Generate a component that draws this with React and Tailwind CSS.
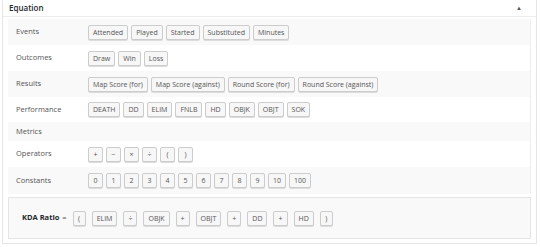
const rows = [
  { label: 'Events', items: ['Attended', 'Played', 'Started', 'Substituted', 'Minutes'], h: 'h-[26px]' },
  { label: 'Outcomes', items: ['Draw', 'Win', 'Loss'], h: 'h-[26px]' },
  { label: 'Results', items: ['Map Score (for)', 'Map Score (against)', 'Round Score (for)', 'Round Score (against)'], h: 'h-[26px]' },
  { label: 'Performance', items: ['DEATH', 'DD', 'ELIM', 'FNLB', 'HD', 'OBJK', 'OBJT', 'SOK'], h: 'h-[25px]' },
  { label: 'Metrics', items: [], h: 'h-[19px]' },
  { label: 'Operators', items: ['+', '−', '×', '÷', '(', ')'], h: 'h-[26px]' },
  { label: 'Constants', items: ['0', '1', '2', '3', '4', '5', '6', '7', '8', '9', '10', '100'], h: 'h-[27px]' },
];

const equation = ['(', 'ELIM', '÷', 'OBJK', '+', 'OBJT', '+', 'DD', '+', 'HD', ')'];

// small WP-style button used for every variable and operator
const Chip = ({ children, narrow }) => (
  <span
    className={`inline-flex items-center justify-center h-[15px] px-[4px] ${narrow ? 'min-w-[13px]' : 'min-w-[15px]'} bg-[#f7f7f7] border border-[#cccccc] rounded-[2px] shadow-[0_1px_0_#dcdcdc] text-[7px] text-[#555] leading-none whitespace-nowrap`}
  >
    {children}
  </span>
);

export default function App() {
  return (
    <div className="w-[540px] h-[247px] bg-white pl-[2px] pr-[3px] pb-[3px]" style={{ fontFamily: '"Open Sans", "Noto Sans", sans-serif' }}>
      <div className="h-full border border-t-0 border-[#e5e5e5] bg-white flex flex-col">
        {/* Header */}
        <div className="h-[17px] flex items-center justify-between pl-[6px] pr-[14px] border-b border-[#eeeeee]">
          <span className="text-[8px] font-semibold text-[#23282d]">Equation</span>
          <span className="text-[6px] text-[#555]">▲</span>
        </div>

        <div className="flex-1 px-[5px] pt-[2px] pb-[4px] flex flex-col">
          {/* Variable table */}
          <div className="border-r border-[#eeeeee]">
            {rows.map((row, i) => (
              <div
                key={row.label}
                className={`flex items-center ${row.h} ${i % 2 === 0 ? 'bg-[#f9f9f9]' : 'bg-white'}`}
              >
                <div className="w-[80px] pl-[8px] text-[7.5px] text-[#555]">{row.label}</div>
                <div className="flex gap-[3px]">
                  {row.items.map((item) => (
                    <Chip key={item}>{item}</Chip>
                  ))}
                </div>
              </div>
            ))}
          </div>

          {/* Equation builder */}
          <div className="mt-[3px] h-[42px] border border-[#e5e5e5] bg-[#f9f9f9] flex items-center pl-[13px]">
            <span className="text-[7.5px] font-bold text-[#23282d] mr-[3px]">KDA Ratio</span>
            <span className="text-[7.5px] text-[#555] mr-[6px]">=</span>
            <div className="flex gap-[6px]">
              {equation.map((item, i) => (
                <Chip key={i} narrow>{item}</Chip>
              ))}
            </div>
          </div>
        </div>
      </div>
    </div>
  );
}
